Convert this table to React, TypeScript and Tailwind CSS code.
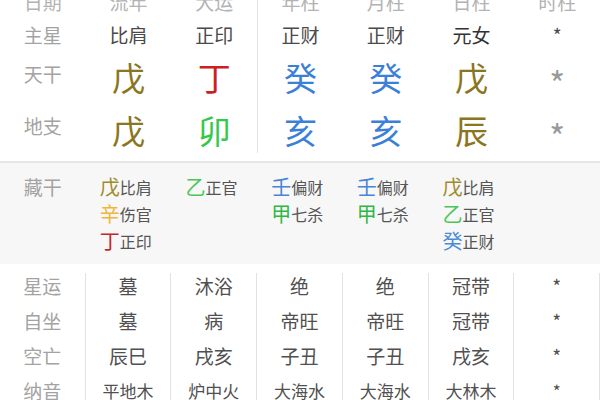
const LABEL = 'text-[19px] text-[#a3a3a3]';

const heads = ['日期', '流年', '大运', '年柱', '月柱', '日柱', '时柱'];
const mainStars = ['比肩', '正印', '正财', '正财', '元女', '*'];

const OLIVE = 'text-[#8a7521]';
const BLUE = 'text-[#3b7fd9]';

const stems = [
  { c: '戊', cls: OLIVE },
  { c: '丁', cls: 'text-[#cc2020]' },
  { c: '癸', cls: BLUE },
  { c: '癸', cls: BLUE },
  { c: '戊', cls: OLIVE },
];
const branches = [
  { c: '戊', cls: OLIVE },
  { c: '卯', cls: 'text-[#33c94a]' },
  { c: '亥', cls: BLUE },
  { c: '亥', cls: BLUE },
  { c: '辰', cls: OLIVE },
];

const hidden = [
  [
    { c: '戊', cls: 'text-[#9d8b2c]', t: '比肩' },
    { c: '辛', cls: 'text-[#efb63e]', t: '伤官' },
    { c: '丁', cls: 'text-[#c3262c]', t: '正印' },
  ],
  [{ c: '乙', cls: 'text-[#4cc65a]', t: '正官' }],
  [
    { c: '壬', cls: 'text-[#4a84d6]', t: '偏财' },
    { c: '甲', cls: 'text-[#2fb846]', t: '七杀' },
  ],
  [
    { c: '壬', cls: 'text-[#4a84d6]', t: '偏财' },
    { c: '甲', cls: 'text-[#2fb846]', t: '七杀' },
  ],
  [
    { c: '戊', cls: 'text-[#9d8b2c]', t: '比肩' },
    { c: '乙', cls: 'text-[#4cc65a]', t: '正官' },
    { c: '癸', cls: 'text-[#4a8bd8]', t: '正财' },
  ],
];

const bottomRows = [
  { label: '星运', vals: ['墓', '沐浴', '绝', '绝', '冠带', '*'], small: false },
  { label: '自坐', vals: ['墓', '病', '帝旺', '帝旺', '冠带', '*'], small: false },
  { label: '空亡', vals: ['辰巳', '戌亥', '子丑', '子丑', '戌亥', '*'], small: false },
  { label: '纳音', vals: ['平地木', '炉中火', '大海水', '大海水', '大林木', '*'], small: true },
];

// top part: column index 3 carries the divider between luck and pillars
const divider = (i: number) => (i === 3 ? 'border-l border-[#e4e4e4]' : '');

export default function App() {
  return (
    <div className="w-[600px] h-[400px] overflow-hidden bg-white font-['Noto_Sans_CJK_SC','Noto_Sans',sans-serif]">
      {/* Pillars */}
      <div className="grid grid-cols-7 -mt-[14px]">
        {heads.map((h, i) => (
          <div key={'h' + i} className={`h-[32px] flex items-center justify-center text-[19px] text-[#b3b3b3] ${divider(i)}`}>
            {h}
          </div>
        ))}

        <div className={`h-[34px] flex items-center justify-center ${LABEL}`}>主星</div>
        {mainStars.map((s, i) => (
          <div
            key={'m' + i}
            className={`h-[34px] flex items-center justify-center text-[19px] ${
              i === 4 ? 'text-[#333]' : 'text-[#4a4a4a]'
            } ${divider(i + 1)}`}
          >
            {s}
          </div>
        ))}

        <div className={`h-[52px] flex items-center justify-center pb-[8px] ${LABEL}`}>天干</div>
        {stems.map((s, i) => (
          <div key={'s' + i} className={`h-[52px] flex items-center justify-center text-[33px] ${s.cls} ${divider(i + 1)}`}>
            {s.c}
          </div>
        ))}
        <div className="h-[52px] flex items-center justify-center text-[34px] text-[#9a9a9a] pt-[9px]">*</div>

        <div className={`h-[49px] flex items-center justify-center pb-[4px] ${LABEL}`}>地支</div>
        {branches.map((s, i) => (
          <div key={'b' + i} className={`h-[49px] flex items-center justify-center text-[33px] pt-[4px] ${s.cls} ${divider(i + 1)}`}>
            {s.c}
          </div>
        ))}
        <div className="h-[49px] flex items-center justify-center text-[34px] text-[#9a9a9a] pt-[13px]">*</div>
      </div>

      {/* Hidden stems */}
      <div className="mt-[8px] border-t-2 border-[#e6e6e6] bg-[#f7f7f7] grid grid-cols-7 py-[10px]">
        <div className={`flex justify-center leading-[27px] ${LABEL}`}>藏干</div>
        {hidden.map((col, i) => (
          <div key={'z' + i} className="flex flex-col pl-[14px]">
            {col.map((it, j) => (
              <div key={j} className="flex items-center h-[27px]">
                <span className={`text-[20px] ${it.cls}`}>{it.c}</span>
                <span className="text-[16px] text-[#555]">{it.t}</span>
              </div>
            ))}
          </div>
        ))}
        <div />
      </div>

      {/* Cycles */}
      <div className="grid grid-cols-7 mt-[9px]">
        {bottomRows.map((r, ri) => (
          <div key={r.label} className="contents">
            <div className={`h-[35px] flex justify-center leading-[26px] border-r border-[#e2e2e2] ${LABEL}`}>
              {r.label}
            </div>
            {r.vals.map((v, i) => (
              <div
                key={ri + '-' + i}
                className={`h-[35px] flex justify-center leading-[26px] border-r border-[#e2e2e2] text-[#505050] ${
                  r.small ? 'text-[17px]' : 'text-[19px]'
                }`}
              >
                {v}
              </div>
            ))}
          </div>
        ))}
      </div>
    </div>
  );
}
